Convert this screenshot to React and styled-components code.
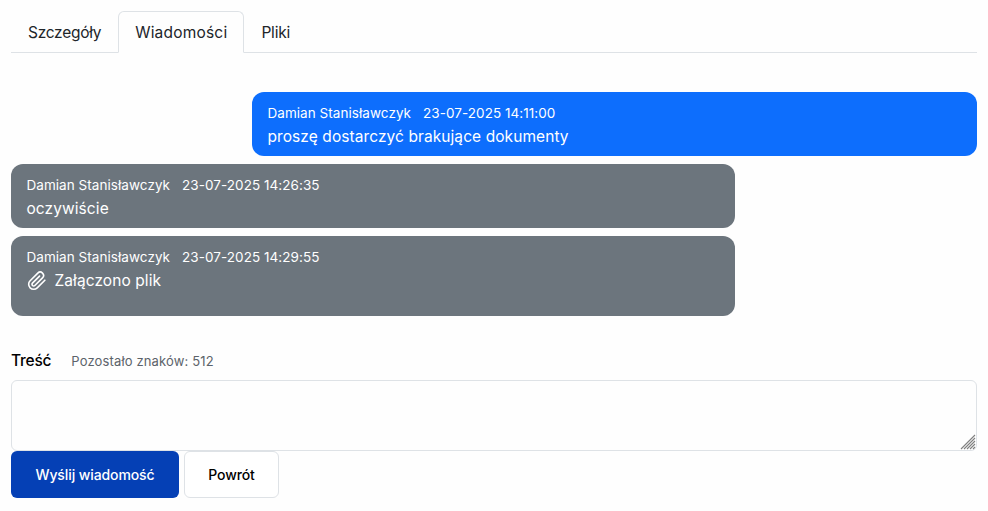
import styled, { createGlobalStyle } from "styled-components"

const messages = [
    { id: 1, mine: true, author: "Damian Stanisławczyk", date: "23-07-2025 14:11:00", text: "proszę dostarczyć brakujące dokumenty" },
    { id: 2, author: "Damian Stanisławczyk", date: "23-07-2025 14:26:35", text: "oczywiście" },
    { id: 3, author: "Damian Stanisławczyk", date: "23-07-2025 14:29:55", text: "Załączono plik", attachment: true },
]

export default function App() {
    return (
        <Page>
            <GlobalStyle />
            <Tabs>
                <Tab $tracking="-0.27px">Szczegóły</Tab>
                <Tab $active $tracking="0.2px">Wiadomości</Tab>
                <Tab $tracking="-0.2px">Pliki</Tab>
            </Tabs>
            <MessageList>
                {messages.map((message) => {
                    return (
                        <Message key={message.id} $mine={message.mine} $attachment={message.attachment}>
                            <Meta>
                                <span>{message.author}</span>
                                <span>{message.date}</span>
                            </Meta>
                            <Body>
                                {message.attachment && (
                                    <svg width="20" height="20" viewBox="0 0 24 24" fill="none" stroke="currentColor" strokeWidth="1.9" strokeLinecap="round" strokeLinejoin="round">
                                        <path d="M21.44 11.05l-9.19 9.19a6 6 0 0 1-8.49-8.49l9.19-9.19a4 4 0 0 1 5.66 5.66l-9.2 9.19a2 2 0 0 1-2.83-2.83l8.49-8.48" />
                                    </svg>
                                )}
                                {message.text}
                            </Body>
                        </Message>
                    )
                })}
            </MessageList>
            <LabelRow>
                <Label>Treść</Label>
                <Counter>Pozostało znaków: 512</Counter>
            </LabelRow>
            <TextAreaWrap>
                <TextArea />
                <Grip width="16" height="16" viewBox="0 0 16 16" stroke="#808080" strokeWidth="1.1">
                    <path d="M1 15L15 1M4 15L15 4M7 15L15 7M10 15L15 10M13 15L15 13" />
                </Grip>
            </TextAreaWrap>
            <Buttons>
                <PrimaryButton>Wyślij wiadomość</PrimaryButton>
                <SecondaryButton>Powrót</SecondaryButton>
            </Buttons>
        </Page>
    )
}

const GlobalStyle = createGlobalStyle`
    html, body {
        margin: 0;
        background: #fefefe;
    }
    * {
        box-sizing: border-box;
    }
`

const Page = styled.div`
    width: 988px;
    height: 511px;
    padding: 11px 11px 0;
    font-family: "Inter", "Liberation Sans", sans-serif;
    color: #212529;
    overflow: hidden;
`

const Tabs = styled.nav`
    display: flex;
    height: 42px;
    border-bottom: 1px solid #dee2e6;
`

const Tab = styled.a`
    height: 42px;
    padding: 0 16px;
    display: flex;
    align-items: center;
    font-size: 15.5px;
    letter-spacing: ${(props) => props.$tracking};
    border: 1px solid ${(props) => (props.$active ? "#dee2e6" : "transparent")};
    border-bottom-color: ${(props) => (props.$active ? "#fefefe" : "transparent")};
    border-radius: 6px 6px 0 0;
    background: ${(props) => (props.$active ? "#fefefe" : "transparent")};
`

const MessageList = styled.div`
    display: flex;
    flex-direction: column;
    gap: 8px;
    margin-top: 39px;
`

const Message = styled.div`
    width: ${(props) => (props.$mine ? "725px" : "724px")};
    margin-left: ${(props) => (props.$mine ? "auto" : "0")};
    padding: 8px 15.5px ${(props) => (props.$attachment ? "24px" : "8px")};
    border-radius: 12px;
    color: #ffffff;
    background: ${(props) => (props.$mine ? "#0d6efd" : "#6c757d")};
`

const Meta = styled.div`
    display: flex;
    gap: 12px;
    font-size: 13.5px;
    line-height: 26px;
    letter-spacing: 0.05px;
`

const Body = styled.div`
    display: flex;
    align-items: center;
    gap: 8px;
    font-size: 15.5px;
    line-height: 22px;
    letter-spacing: 0.08px;
`

const LabelRow = styled.div`
    display: flex;
    align-items: baseline;
    gap: 20px;
    margin-top: 34px;
    height: 30px;
`

const Label = styled.label`
    font-size: 15.5px;
    line-height: 22px;
    letter-spacing: -0.2px;
    color: #000000;
    font-weight: 500;
`

const Counter = styled.span`
    font-size: 13px;
    letter-spacing: 0.14px;
    color: #5c636a;
`

const TextAreaWrap = styled.div`
    position: relative;
    height: 71px;
`

const TextArea = styled.textarea`
    display: block;
    width: 100%;
    height: 100%;
    border: 1px solid #dee2e6;
    border-radius: 6px;
    background: #fefefe;
    outline: none;
    resize: none;
`

const Grip = styled.svg`
    position: absolute;
    right: 1px;
    bottom: 1px;
`

const Buttons = styled.div`
    display: flex;
    gap: 5px;
`

const PrimaryButton = styled.button`
    width: 168px;
    height: 47px;
    border: none;
    border-radius: 6px;
    background: #0540b5;
    color: #ffffff;
    font-family: inherit;
    font-size: 14px;
    font-weight: 500;
    letter-spacing: -0.1px;
`

const SecondaryButton = styled.button`
    width: 95px;
    height: 47px;
    border: 1px solid #dee2e6;
    border-radius: 6px;
    background: #ffffff;
    color: #000000;
    font-family: inherit;
    font-size: 14px;
    font-weight: 500;
    letter-spacing: -0.1px;
`
